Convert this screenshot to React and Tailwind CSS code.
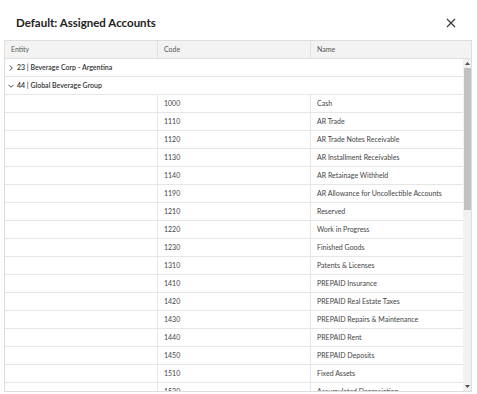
import React from 'react';

const accounts = [
  ['1000', 'Cash'],
  ['1110', 'AR Trade'],
  ['1120', 'AR Trade Notes Receivable'],
  ['1130', 'AR Installment Receivables'],
  ['1140', 'AR Retainage Withheld'],
  ['1190', 'AR Allowance for Uncollectible Accounts'],
  ['1210', 'Reserved'],
  ['1220', 'Work in Progress'],
  ['1230', 'Finished Goods'],
  ['1310', 'Patents & Licenses'],
  ['1410', 'PREPAID Insurance'],
  ['1420', 'PREPAID Real Estate Taxes'],
  ['1430', 'PREPAID Repairs & Maintenance'],
  ['1440', 'PREPAID Rent'],
  ['1450', 'PREPAID Deposits'],
  ['1510', 'Fixed Assets'],
  ['1520', 'Accumulated Depreciation'],
];

const Chevron = ({ open }) => (
  <svg width="6" height="6" viewBox="0 0 6 6" className="mr-[3px] shrink-0">
    {open ? (
      <path d="M0.5 1.8 L3 4.3 L5.5 1.8" fill="none" stroke="#333" strokeWidth="0.9" />
    ) : (
      <path d="M1.8 0.5 L4.3 3 L1.8 5.5" fill="none" stroke="#333" strokeWidth="0.9" />
    )}
  </svg>
);

const GroupRow = ({ label, open }) => (
  <div className="h-[18px] flex items-center pl-[3px] border-b border-[#e6e6e6] text-[7px] font-semibold text-[#333]">
    <Chevron open={open} />
    <span>{label}</span>
  </div>
);

const AccountRow = ({ code, name }) => (
  <div className="h-[18px] grid grid-cols-[153px_153px_1fr] border-b border-[#e6e6e6] text-[7px] text-[#444]">
    <div className="border-r border-[#e6e6e6]" />
    <div className="flex items-center pl-[6px] border-r border-[#e6e6e6]">{code}</div>
    <div className="flex items-center pl-[6px]">{name}</div>
  </div>
);

const Scrollbar = () => (
  <div className="w-[8px] bg-[#f1f1f1] flex flex-col items-center">
    <div className="h-[9px] flex items-center justify-center">
      <svg width="5" height="3" viewBox="0 0 5 3"><path d="M0 3 L2.5 0 L5 3 Z" fill="#505050" /></svg>
    </div>
    <div className="w-[7px] h-[142px] bg-[#c1c1c1]" />
    <div className="flex-1" />
    <div className="h-[9px] flex items-center justify-center">
      <svg width="5" height="3" viewBox="0 0 5 3"><path d="M0 0 L2.5 3 L5 0 Z" fill="#505050" /></svg>
    </div>
  </div>
);

export default function App() {
  return (
    <div className="w-[477px] h-[394px] bg-white overflow-hidden" style={{ fontFamily: 'Lato, "Noto Sans", sans-serif' }}>
      <div className="h-[40px] flex items-center justify-between pl-[16px] pr-[21px] pt-[5px]">
        <h1 className="text-[11.5px] font-bold text-[#222]">Default: Assigned Accounts</h1>
        <svg width="10" height="10" viewBox="0 0 10 10">
          <path d="M1 1 L9 9 M9 1 L1 9" stroke="#333" strokeWidth="1.1" />
        </svg>
      </div>
      <div className="ml-[4px] w-[468px] h-[352px] border border-[#dedede] flex flex-col">
        <div className="h-[18px] shrink-0 grid grid-cols-[153px_153px_1fr] bg-[#f3f3f3] border-b border-[#e0e0e0] text-[7px] text-[#555]">
          <div className="flex items-center pl-[6px] border-r border-[#e0e0e0]">Entity</div>
          <div className="flex items-center pl-[6px] border-r border-[#e0e0e0]">Code</div>
          <div className="flex items-center pl-[6px]">Name</div>
        </div>
        <div className="flex flex-1 min-h-0">
          <div className="flex-1 overflow-hidden">
            <GroupRow label="23 | Beverage Corp - Argentina" />
            <GroupRow label="44 | Global Beverage Group" open />
            {accounts.map(([code, name]) => (
              <AccountRow key={code} code={code} name={name} />
            ))}
          </div>
          <Scrollbar />
        </div>
      </div>
    </div>
  );
}
